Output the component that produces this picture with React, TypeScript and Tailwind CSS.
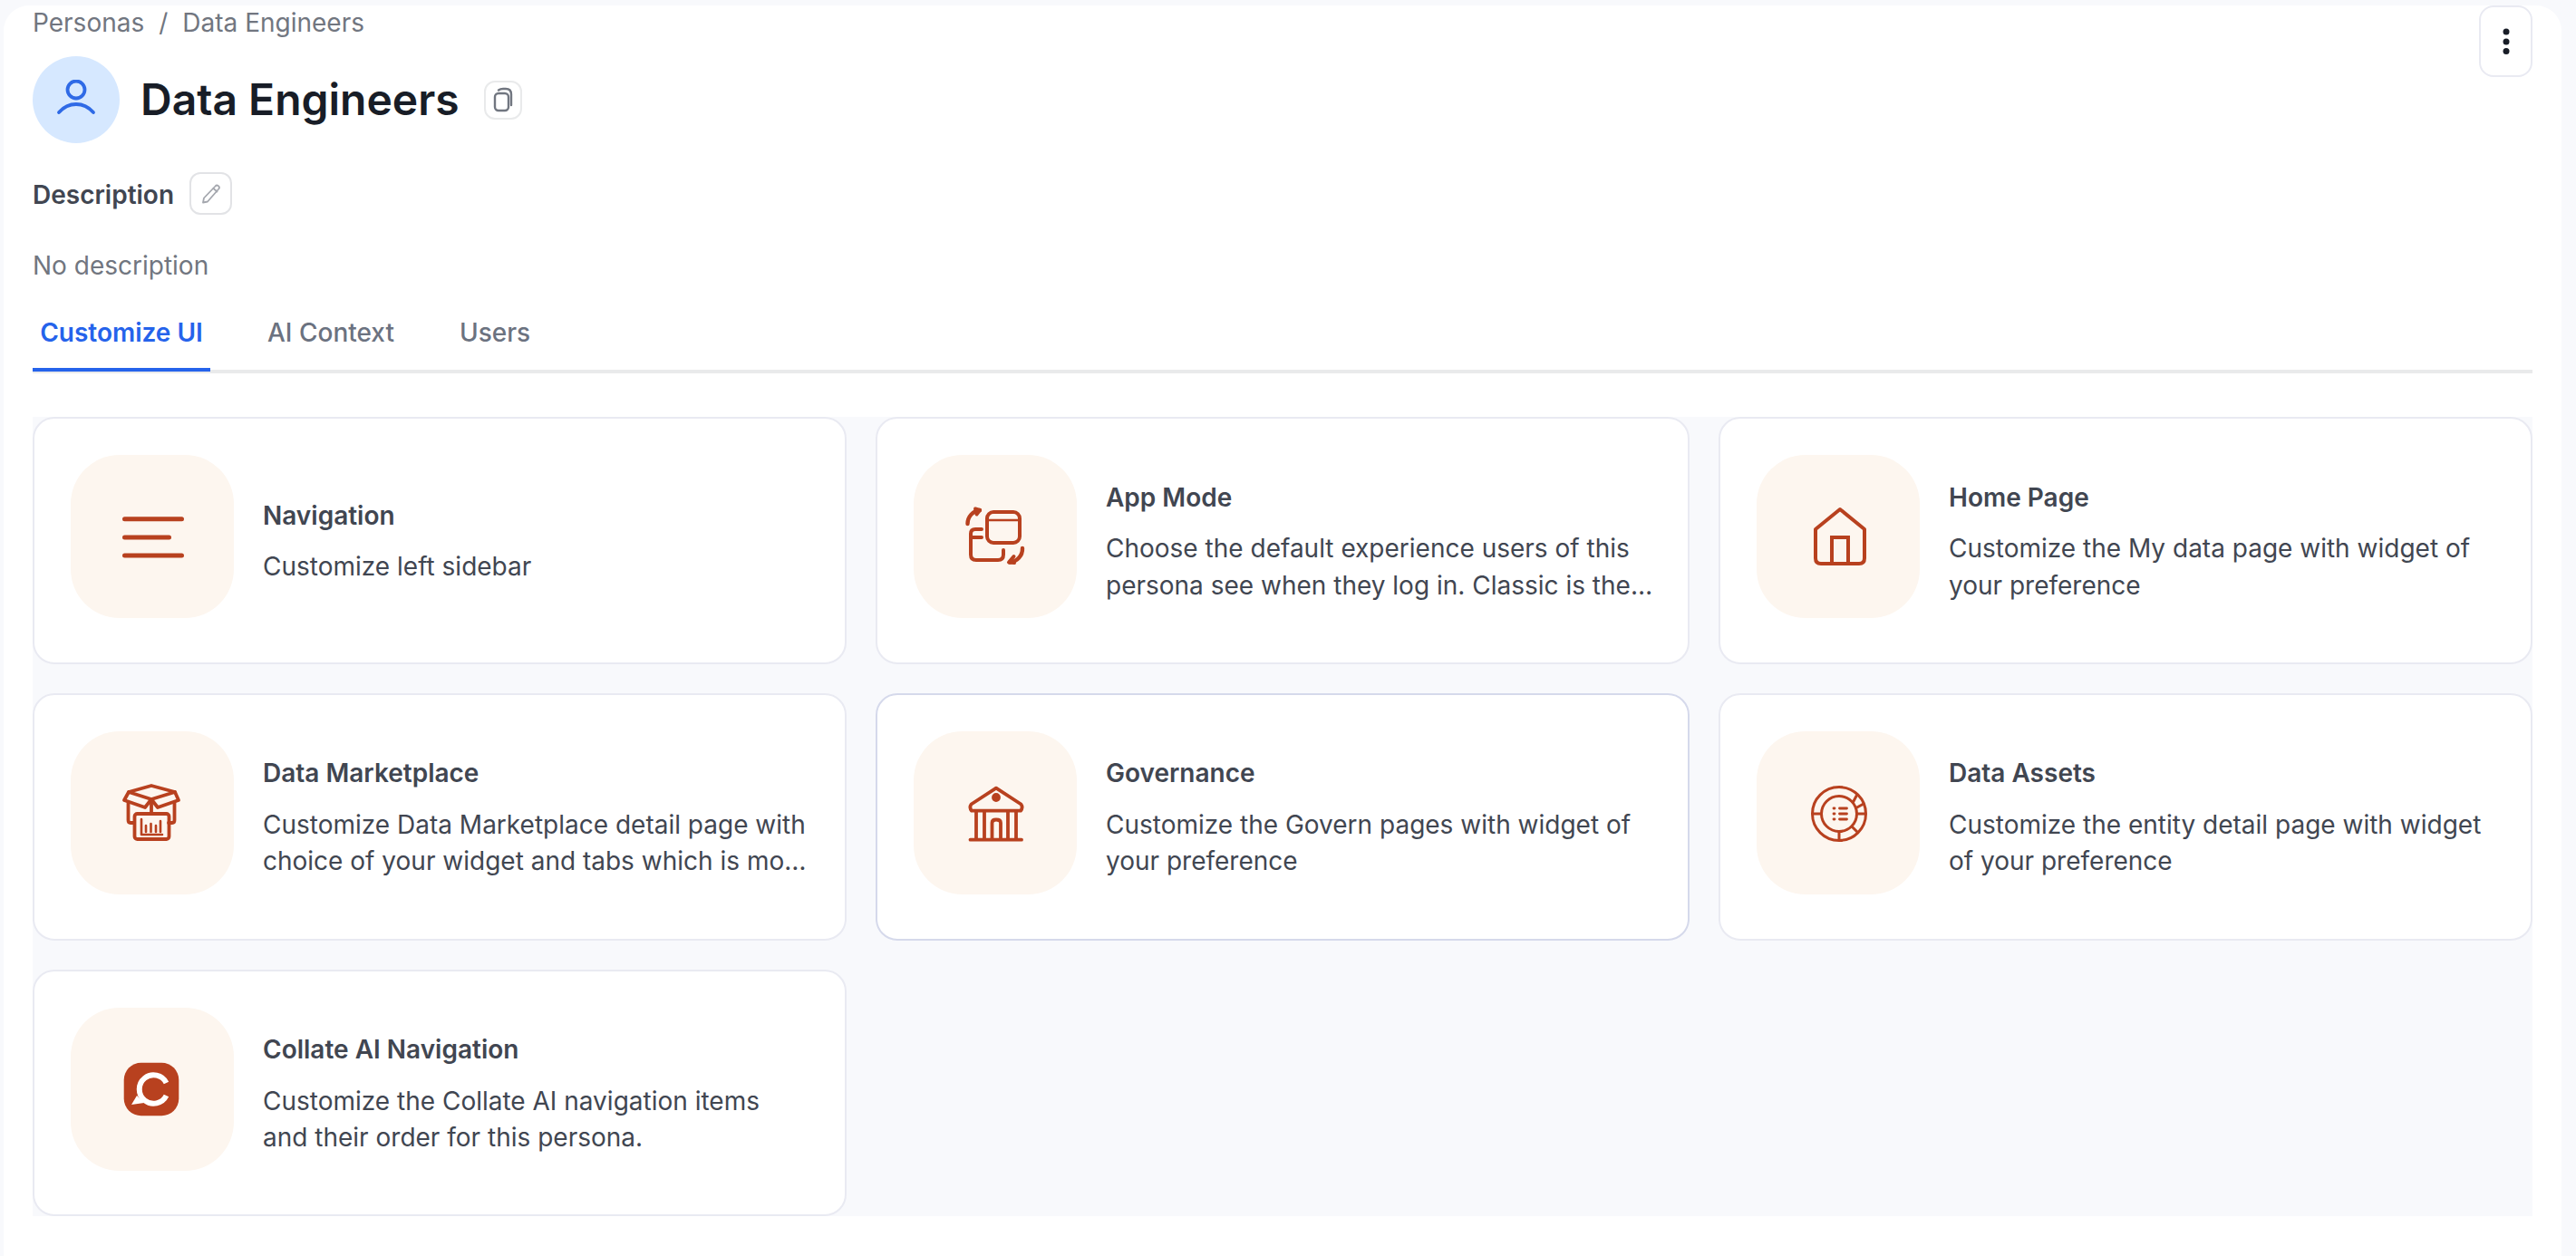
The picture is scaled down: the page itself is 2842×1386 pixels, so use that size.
import React from "react";

const c = "#b8411f";

function Svg({ children }: { children: React.ReactNode }) {
  return (
    <svg viewBox="0 0 64 64" width={64} height={64} fill="none" stroke={c} strokeLinecap="round" strokeLinejoin="round" className="overflow-visible">
      {children}
    </svg>
  );
}

const NavIcon = () => (
  <Svg>
    <g strokeWidth={5}>
      <path d="M1.5 12.7H64.5M1.5 33H50.5M1.5 53H64.5" />
    </g>
  </Svg>
);

const AppModeIcon = () => (
  <Svg>
    <g strokeWidth={4}>
      <rect x={23} y={5} width={36} height={34} rx={7} />
      <path d="M23 14H59" strokeWidth={2.6} />
      <path d="M17 24H10Q5 24 5 29V52Q5 58 11 58H35Q41 58 41 52V47" />
      <path d="M5 33H17" />
      <path d="M1.5 18A15 15 0 0 1 15 3" strokeWidth={4.4} />
      <path d="M10 1.500L15 3L11.500 7.500" />
      <path d="M62 45A15 15 0 0 1 48 60.500" strokeWidth={4.4} />
      <path d="M52.500 54L47 60.500L53 61" />
    </g>
  </Svg>
);

const HomeIcon = () => (
  <Svg>
    <g strokeWidth={4} strokeLinecap="butt" strokeLinejoin="miter">
      <path d="M34 2L61 24V56Q61 62 55 62H13Q7 62 7 56V24Z" strokeLinejoin="round" />
      <path d="M25 62V33H43V62" />
    </g>
  </Svg>
);

const MarketIcon = () => (
  <Svg>
    <g strokeWidth={3.800}>
      <path d="M6 9L31 2L57 9L31 17Z" />
      <path d="M6 9L1 18L24 26L31 17L38 26L61 18L57 9" />
      <path d="M31 17V33" />
      <path d="M5.500 21V40Q5.500 43 8 43H12M56.500 21V40Q56.500 43 54 43H50" />
      <rect x={12.500} y={33} width={38} height={28} rx={3} />
    </g>
    <g strokeWidth={2.600}>
      <path d="M20 39V56H43" />
      <path d="M25 46V53M30.500 44V53M36 46V53M41 41V53" />
    </g>
  </Svg>
);

const GovIcon = () => (
  <Svg>
    <g strokeWidth={3.800}>
      <path d="M33 4.700L60.500 22.500Q63 26 60 29.700H6Q3 26 5.500 22.500Z" />
      <circle cx={33} cy={15} r={3} fill={c} />
      <path d="M11 30V61M20 30V61M46 30V61M55 30V61" />
      <path d="M28.500 61V43Q28.500 39.500 33 39.500Q38 39.500 38 43V61" />
      <path d="M4.500 61.700H61" />
    </g>
  </Svg>
);

const AssetsIcon = () => (
  <Svg>
    <g strokeWidth={3}>
      <circle cx={33} cy={33} r={29.500} />
      <circle cx={33} cy={33} r={19.500} />
      <path d="M4 33H14M52 33H62M33 52.500V62.500M47 47L54 54" strokeLinecap="butt" />
      <path d="M48 21L52.500 12.500M51 27L60 22" strokeLinecap="butt" />
    </g>
    <g strokeWidth={2.800}>
      <path d="M27 27H28M27 33H28M27 39H28" />
      <path d="M33.500 27H41.500M33.500 33H41.500M33.500 39H41.500" />
    </g>
  </Svg>
);

const CollateIcon = () => (
  <Svg>
    <rect x={0.700} y={2.700} width={60.600} height={58.600} rx={19} fill={c} stroke="none" />
    <path d="M47.500 25A15.700 15.700 0 1 0 47.500 39" stroke="#ffffff" strokeWidth={6} strokeLinecap="butt" />
    <path d="M9 49L15 39L23 47Z" fill="#ffffff" stroke="none" />
  </Svg>
);

const cards = [
  { t: "Navigation", d: "Customize left sidebar", i: <NavIcon /> },
  { t: "App Mode", d: "Choose the default experience users of this persona see when they log in. Classic is the full interface with all features and tools.", i: <AppModeIcon /> },
  { t: "Home Page", d: "Customize the My data page with widget of your preference", i: <HomeIcon /> },
  { t: "Data Marketplace", d: "Customize Data Marketplace detail page with choice of your widget and tabs which is more relevant to this persona.", i: <MarketIcon /> },
  { t: "Governance", d: "Customize the Govern pages with widget of your preference", i: <GovIcon />, hover: true },
  { t: "Data Assets", d: "Customize the entity detail page with widget of your preference", i: <AssetsIcon /> },
  { t: "Collate AI Navigation", d: "Customize the Collate AI navigation items and their order for this persona.", i: <CollateIcon /> },
];

export default function App() {
  return (
    <div className="h-[1386px] bg-[#f8f9fc] pl-[4px] pr-[16px] pt-[6px] font-['Inter',sans-serif]">
      <div className="h-full overflow-hidden rounded-t-[28px] bg-white px-[32px]">
        <div className="flex items-start justify-between">
          <div>
            <div className="flex h-[38px] items-center gap-[16px] text-[28px] text-[#717680]">
              <span>Personas</span>
              <span>/</span>
              <span>Data Engineers</span>
            </div>
            <div className="mt-[18px] flex items-center">
              <div className="flex h-[96px] w-[96px] items-center justify-center rounded-full bg-[#d6e8ff]">
                <svg viewBox="0 0 44 44" width={44} height={44} fill="none" stroke="#2f6ae6" strokeWidth={3.800} strokeLinecap="round">
                  <circle cx={22} cy={11} r={9.500} />
                  <path d="M3 36Q11 27 22 27Q33 27 41 36" />
                </svg>
              </div>
              <h1 className="ml-[23px] text-[48px] leading-[60px] font-semibold text-[#181d27]">Data Engineers</h1>
              <button className="ml-[27px] flex h-[43px] w-[42px] items-center justify-center rounded-[12px] border-2 border-[#e9eaeb] bg-white">
                <svg viewBox="0 0 24 28" width={24} height={28} fill="none" stroke="#717680" strokeWidth={2.400} strokeLinecap="round">
                  <rect x={3} y={7} width={15} height={19} rx={4} />
                  <path d="M7 3.500Q9 2 12 2H15Q21 2 21 8V20" />
                </svg>
              </button>
            </div>
          </div>
          <button className="flex h-[79px] w-[59px] items-center justify-center rounded-[16px] border-2 border-[#e9eaf2] bg-white">
            <svg viewBox="0 0 8 30" width={8} height={30} fill="#181d27">
              <circle cx={4} cy={4} r={3.500} />
              <circle cx={4} cy={15} r={3.500} />
              <circle cx={4} cy={25.500} r={3.500} />
            </svg>
          </button>
        </div>
        <div className="mt-[32px] flex h-[47px] items-center gap-[17px]">
          <span className="pt-[2px] text-[28px] font-semibold text-[#414651]">Description</span>
          <button className="flex h-[47px] w-[47px] items-center justify-center rounded-[12px] border-2 border-[#e2e3e6] bg-white">
            <svg viewBox="0 0 24 24" width={24} height={24} fill="none" stroke="#a4a7ae" strokeWidth={1.800} strokeLinecap="round" strokeLinejoin="round">
              <path d="M16.500 3.500a2.400 2.400 0 0 1 3.800 3L8 20.500l-5 1 1-5Z" />
              <path d="M14.500 6l4 3.500" />
            </svg>
          </button>
        </div>
        <p className="mt-[36px] text-[28px] leading-[40px] text-[#717680]">No description</p>
        <div className="mt-[34px] flex h-[65px] items-start border-b-4 border-[#e9eaeb]">
          <div className="mb-[-2px] flex h-[63px] w-[196px] justify-center border-b-4 border-[#2563eb] text-[28px] leading-[40px] font-semibold text-[#2563eb]">Customize UI</div>
          <div className="ml-[55px] px-[8px] text-[28px] leading-[40px] font-medium text-[#6b7280]">AI Context</div>
          <div className="ml-[56px] px-[8px] text-[28px] leading-[40px] font-medium text-[#6b7280]">Users</div>
        </div>
        <div className="mt-[48px] grid grid-cols-3 gap-[32px] bg-[#f8f9fc]">
          {cards.map((x) => (
            <div
              key={x.t}
              className={`flex h-[272.800px] gap-[32px] rounded-[24px] border-2 bg-white pr-[37px] pl-[40px] ${x.hover ? "border-[#d5d9eb]" : "border-[#e9eaf2]"}`}
            >
              <div className="mt-[40px] flex h-[180px] w-[180px] shrink-0 items-center justify-center rounded-[54px] bg-[#fdf6ef]">{x.i}</div>
              <div className="min-w-0 flex-1 self-center pt-[2px] text-[28px] leading-[40.500px] text-[#414651]">
                <div className="font-semibold">{x.t}</div>
                <div className="mt-[16px] line-clamp-2">{x.d}</div>
              </div>
            </div>
          ))}
        </div>
      </div>
    </div>
  );
}
